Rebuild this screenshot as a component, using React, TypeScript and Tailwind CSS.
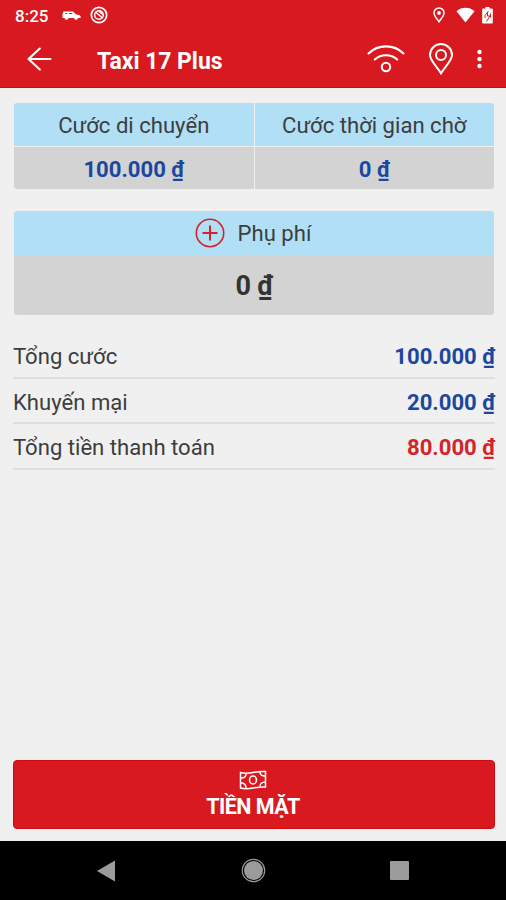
import React from 'react';

interface FareCellProps {
  label: string;
  value: string;
  className?: string;
}

interface SummaryRow {
  label: string;
  value: string;
  color: string;
}

const rows: SummaryRow[] = [
  { label: 'Tổng cước', value: '100.000 ₫', color: 'text-[#1a47a0]' },
  { label: 'Khuyến mại', value: '20.000 ₫', color: 'text-[#1a47a0]' },
  { label: 'Tổng tiền thanh toán', value: '80.000 ₫', color: 'text-[#d3242b]' },
];

const StatusBar: React.FC = () => (
  <div className="flex h-[30px] items-center pl-[15px] pr-[13px]">
    <span className="w-[47px] pt-px text-[17px] font-medium leading-[30px]">8:25</span>
    {/* Car */}
    <svg className="mt-px" width="19" height="10" viewBox="0 0 19 10" fill="currentColor">
      <path d="M1.500.5h9.500l3 2.800 3.500 1c.8.300 1.200 1 1.200 2.700H16a2 1.800 0 0 1-4 0H6.500a2 1.800 0 0 1-4 0H.5V3z" />
      <path d="M3.500 2h1.800v1H3.200zM7 2h2.800l1 1H7z" fill="#d8191f" />
    </svg>
    {/* Sync disabled */}
    <svg className="ml-[9px]" width="18" height="18" viewBox="0 0 18 18" fill="none" stroke="currentColor">
      <circle cx="9" cy="9" r="7.700" strokeWidth="1.700" />
      <circle cx="9" cy="9" r="4.300" strokeWidth="1.400" />
      <path d="m5.500 6 7 6" strokeWidth="1.600" />
      <path d="M8 5.500h3.500L13 9.500z" fill="currentColor" stroke="none" />
    </svg>
    <div className="flex-1" />
    <svg width="12" height="16" viewBox="0 0 12 16" fill="none" stroke="currentColor" strokeWidth="1.500">
      <path d="M6 14.800C4 11.800 1 8.700 1 5.900a5 5 0 0 1 10 0c0 2.800-3 5.900-5 8.900z" />
      <circle cx="6" cy="5.900" r="1.900" fill="currentColor" stroke="none" />
    </svg>
    <svg className="ml-[11px]" width="19" height="16" viewBox="0 0 19 16" fill="currentColor">
      <path d="M.5 4.300C5.500-.3 13.500-.3 18.500 4.300L9.500 15.500z" />
    </svg>
    <svg className="ml-[7px]" width="11" height="17" viewBox="0 0 11 17">
      <path d="M3.500 0h4v1.500H10a.8.8 0 0 1 .8.800v13.400a.8.8 0 0 1-.8.800H1a.8.8 0 0 1-.8-.8V2.300a.8.8 0 0 1 .8-.8h2.500z" fill="currentColor" />
      <path d="M6.500 4 3 8.500v2.300M5.500 5v4H8L4.500 14.500M8.500 6.500v4" fill="none" stroke="#d8191f" strokeWidth="1" />
    </svg>
  </div>
);

const AppBar: React.FC = () => (
  <div className="flex h-[58px] items-center pl-[27px] pr-[24px]">
    <svg width="25" height="24" viewBox="0 0 25 24" fill="none" stroke="currentColor" strokeWidth="2.100" strokeLinecap="round" strokeLinejoin="round">
      <path d="M12.800 1.500 1.500 12l11.300 10.500M1.500 12h22" />
    </svg>
    <h1 className="ml-[45px] flex-1 pt-[5px] text-[23px] font-bold leading-[30px] tracking-[-0.050px]">Taxi 17 Plus</h1>
    <svg width="38" height="28" viewBox="0 0 38 28" fill="none" stroke="currentColor" strokeWidth="2.100" strokeLinecap="round">
      <path d="M1.500 8.500C11-1 27-1 36.500 8.500M7.800 14.500c6.200-5.600 16.200-5.600 22.400 0" />
      <circle cx="19" cy="22" r="4.200" />
    </svg>
    <svg className="ml-[23px]" width="26" height="32" viewBox="0 0 26 32" fill="none" stroke="currentColor" strokeWidth="2">
      <path d="M13 30.300C9.500 24 2 17.800 2 12a11 11 0 0 1 22 0c0 5.800-7.500 12-11 18.300z" />
      <circle cx="13" cy="12" r="5" />
    </svg>
    <svg className="ml-[23px]" width="5" height="20" viewBox="0 0 5 20" fill="currentColor">
      <circle cx="2.500" cy="3" r="2.200" />
      <circle cx="2.500" cy="10" r="2.200" />
      <circle cx="2.500" cy="17" r="2.200" />
    </svg>
  </div>
);

const FareCell: React.FC<FareCellProps> = ({ label, value, className = '' }) => (
  <div className={`overflow-hidden ${className}`}>
    <div className="h-[43px] bg-[#b0dff6] text-center text-[22.100px] leading-[45px]">{label}</div>
    <div className="mt-[1px] h-[42px] bg-[#d3d3d3] text-center text-[22.100px] font-bold leading-[45px] text-[#1a47a0]">
      {value}
    </div>
  </div>
);

const App: React.FC = () => {
  return (
    <div className="flex h-[900px] w-[506px] flex-col overflow-hidden bg-[#f0f0f0] font-['Roboto','Noto_Sans',sans-serif] text-[#3d3d3d]">
      <header className="h-[88px] border-b border-[#d00a0e] bg-[#d8191f] text-white">
        <StatusBar />
        <AppBar />
      </header>

      <main className="flex flex-1 flex-col pl-[13px] pr-[11px] pt-[15px]">
        <div className="mx-px grid grid-cols-2 gap-[1px]">
          <FareCell label="Cước di chuyển" value="100.000 ₫" className="rounded-l-[3px]" />
          <FareCell label="Cước thời gian chờ" value="0 ₫" className="rounded-r-[3px]" />
        </div>

        {/* Surcharge */}
        <div className="mx-px mt-[22px] overflow-hidden rounded-[3px]">
          <div className="flex h-[44px] items-center justify-center gap-[13px] bg-[#b0dff6] pr-[2px]">
            <svg width="30" height="30" viewBox="0 0 30 30" fill="none" stroke="#d3242b">
              <circle cx="15" cy="15" r="13.700" strokeWidth="1.600" />
              <path d="M15 7.500v15M7.500 15h15" strokeWidth="2" />
            </svg>
            <span className="text-[22.100px] leading-[46px]">Phụ phí</span>
          </div>
          <div className="h-[60px] bg-[#d3d3d3] text-center text-[27px] font-bold leading-[63px] tracking-[-0.200px] text-[#333]">0 ₫</div>
        </div>

        <div className="mt-[18px]">
          {rows.map((row) => (
            <div key={row.label} className="flex h-[45.600px] items-center justify-between border-b-2 border-[#dedede] pt-[3.500px] text-[22.100px]">
              <span>{row.label}</span>
              <span className={`font-bold ${row.color}`}>{row.value}</span>
            </div>
          ))}
        </div>

        <button className="mb-[12px] mt-auto flex h-[69px] flex-col items-center rounded-[4px] border border-[#d00a0e] bg-[#d8191f] pr-[2px] pt-[9px] text-white">
          <svg width="28" height="20" viewBox="0 0 28 20" fill="none" stroke="currentColor" strokeWidth="1.500">
            <path d="M1.500 2.500C10 5 18 .5 26.500 1.500v15.500C18 16 10 20.500 1.500 18z" />
            <ellipse cx="14" cy="10" rx="3.500" ry="4" />
            <path d="M2 8c3 0 5-1.500 5-4M2 13c3 0 5 2 5 5M26 6c-3 0-5-1.500-5-4M26 12c-3 0-5 2-5 4.500" />
          </svg>
          <span className="text-[21.500px] font-bold leading-[34px] tracking-[-0.500px]">TIỀN MẶT</span>
        </button>
      </main>

      {/* Android navigation */}
      <nav className="flex h-[59px] items-center bg-black pl-[97px] pr-[97px] text-[#9b9b9b]">
        <svg width="18" height="22" viewBox="0 0 18 22" fill="currentColor">
          <path d="M18 .5v21L0 11z" />
        </svg>
        <svg className="ml-[126px]" width="25" height="25" viewBox="0 0 25 25" fill="currentColor">
          <circle cx="12.500" cy="12.500" r="9.500" />
          <circle cx="12.500" cy="12.500" r="11.200" fill="none" stroke="currentColor" strokeWidth="1.200" />
        </svg>
        <div className="ml-[124px] h-[19px] w-[19px] rounded-[1px] bg-[#9b9b9b]" />
      </nav>
    </div>
  );
};

export default App;
